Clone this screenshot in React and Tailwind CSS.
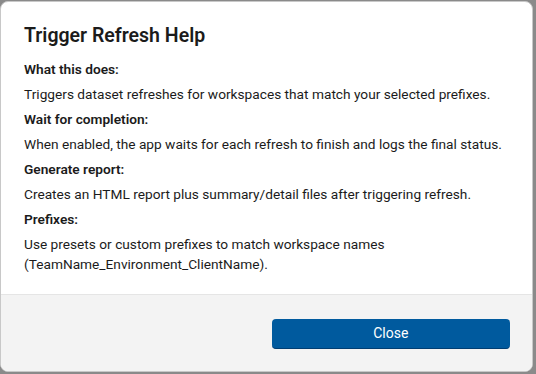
import React from "react";

const sections = [
  {
    label: "What this does:",
    text: "Triggers dataset refreshes for workspaces that match your selected prefixes.",
  },
  {
    label: "Wait for completion:",
    text: "When enabled, the app waits for each refresh to finish and logs the final status.",
  },
  {
    label: "Generate report:",
    text: "Creates an HTML report plus summary/detail files after triggering refresh.",
  },
  {
    label: "Prefixes:",
    text: "Use presets or custom prefixes to match workspace names (TeamName_Environment_ClientName).",
  },
];

const App = () => {
  return (
    <div
      className="w-[536px] h-[374px] bg-[#8a8a8a] pt-[1px] pr-[3px] pb-[2px] overflow-hidden"
      style={{ fontFamily: '"Roboto", "Liberation Sans", sans-serif' }}
    >
      <div className="w-[533px] h-[371px] flex flex-col bg-white rounded-[8px] overflow-hidden border border-[#c8c8c8]">
        <div className="flex-1 pl-[23px] pr-[20px] pt-[20px]">
          <h1 className="text-[19.5px] leading-[28px] font-semibold text-[#1b1b1b] mb-[9px]">
            Trigger Refresh Help
          </h1>
          <div className="flex flex-col gap-[5px] text-[13.7px] leading-[20px] text-[#1b1b1b]">
            {sections.map((s) => (
              <React.Fragment key={s.label}>
                <p className="font-semibold">{s.label}</p>
                <p>{s.text}</p>
              </React.Fragment>
            ))}
          </div>
        </div>
        <div className="h-[77px] bg-[#f3f3f3] border-t border-[#e5e5e5] pl-[24px] pr-[22px] pt-[24px] grid grid-cols-2 gap-[8px]">
          <div></div>
          <button className="h-[30px] rounded-[4px] bg-[#005a9e] border-b border-[#003e73] text-white text-[14px]">
            Close
          </button>
        </div>
      </div>
    </div>
  );
};

export default App;
